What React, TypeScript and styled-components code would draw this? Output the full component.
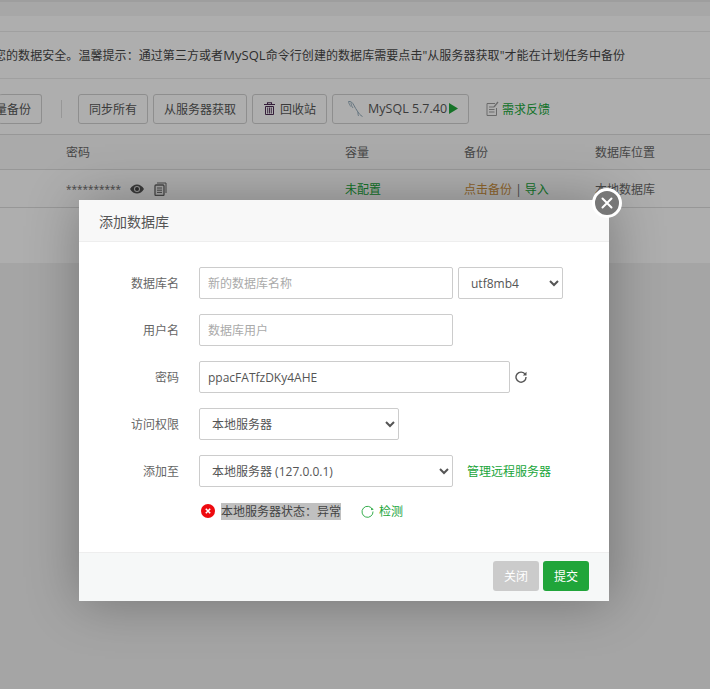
import React from "react";
import styled, { createGlobalStyle } from "styled-components";

const F = `"Open Sans", "Noto Sans CJK SC", sans-serif`;

const Global = createGlobalStyle`
  html, body { margin: 0; padding: 0; background: #f0f0f0; }
  * { box-sizing: border-box; }
  body { width: 710px; height: 689px; overflow: hidden; font-family: ${F}; font-size: 12px; color: #666; }
`;

const Page = styled.div`
  position: relative;
  width: 710px;
  height: 689px;
  overflow: hidden;
  background: #ededed;
`;
const TopBand = styled.div`
  height: 16px;
  background: #f0f0f0;
  border-top: 2px solid #e2e2e2;
`;
const Crumb = styled.div`
  height: 16px;
  background: #fafafa;
  border-bottom: 1px solid #e6e6e6;
`;
const Notice = styled.div`
  height: 47px;
  display: flex;
  align-items: center;
  white-space: nowrap;
  color: #444;
  font-size: 12px;
  background: #fafafa;
  border-bottom: 1px solid #e6e6e6;
  letter-spacing: 0.06px;
`;
const NoticeText = styled.span`
  margin-left: -6px;
`;
const NoticeLatin = styled.span`
  font-size: 13px;
`;
const Toolbar = styled.div`
  height: 56px;
  display: flex;
  align-items: center;
  background: #fafafa;
  border-bottom: 1px solid #d8d8d8;
  padding-top: 4px;
`;
const Btn = styled.div<{ $ml?: number }>`
  height: 30px;
  display: flex;
  align-items: center;
  padding: 0 10px;
  margin-left: ${(p) => p.$ml ?? 5}px;
  border: 1px solid #ccc;
  border-radius: 3px;
  color: #555;
  font-size: 12px;
  white-space: nowrap;
`;
const ClipBtn = styled(Btn)`
  margin-left: -1px;
  border-left: 0;
  width: 43px;
  overflow: hidden;
  justify-content: flex-end;
`;
const MysqlBtn = styled(Btn)`
  padding: 0 10px 0 15px;
  font-size: 12.5px;
`;
const PlayIcon = styled.svg`
  margin-left: 2px;
`;
const Sep = styled.div`
  width: 1px;
  height: 18px;
  background: #d8d8d8;
  margin: 0 16px 0 19px;
`;
const FeedIcon = styled.svg`
  margin-left: 17px;
  margin-right: 3px;
`;
const GreenLink = styled.span`
  color: #20a53a;
`;
const Row = styled.div<{ $h: number; $bg?: string }>`
  height: ${(p) => p.$h}px;
  display: grid;
  grid-template-columns: 66px 279px 119px 131px 1fr;
  align-items: center;
  background: ${(p) => p.$bg ?? "#fafafa"};
  border-bottom: 1px solid #d8d8d8;
  color: #666;
  font-size: 12px;
  white-space: nowrap;
`;
const Pw = styled.span`
  display: flex;
  align-items: center;
  color: #666;
`;
const Stars = styled.span`
  font-size: 10px;
  line-height: 12px;
  margin-right: 9px;
`;
const EyeIcon = styled.svg`
  margin-right: 10px;
`;
const Orange = styled.span`
  color: #cc9140;
`;
const Rest = styled.div`
  height: 55px;
  background: #fafafa;
`;
const Shade = styled.div`
  position: absolute;
  inset: 0;
  background: rgba(0, 0, 0, 0.3);
`;
const Modal = styled.div`
  position: absolute;
  left: 79px;
  top: 200px;
  width: 530px;
  height: 401px;
  background: #fff;
  box-shadow: 1px 1px 50px rgba(0, 0, 0, 0.3);
  display: flex;
  flex-direction: column;
`;
const Title = styled.div`
  height: 42px;
  flex: none;
  display: flex;
  align-items: center;
  padding-left: 20px;
  background: #f8f8f8;
  border-bottom: 1px solid #eee;
  color: #555;
  font-size: 14px;
`;
const Close = styled.div`
  position: absolute;
  right: -13px;
  top: -12px;
  width: 30px;
  height: 30px;
  border-radius: 50%;
  background: #777;
  border: 3px solid #fff;
  display: flex;
  align-items: center;
  justify-content: center;
`;
const Body = styled.div`
  flex: 1;
  display: flex;
  flex-direction: column;
  gap: 15px;
  padding: 25px 0 0 0;
`;
const FormRow = styled.div`
  display: flex;
  align-items: center;
  height: 32px;
`;
const Label = styled.div`
  width: 100px;
  margin-right: 20px;
  text-align: right;
  color: #666;
  font-size: 12px;
  flex: none;
`;
const Input = styled.input<{ $w: number }>`
  width: ${(p) => p.$w}px;
  height: 32px;
  border: 1px solid #ccc;
  border-radius: 2px;
  padding: 0 8px;
  font-family: ${F};
  font-size: 12px;
  color: #555;
  outline: none;
  background: #fff;
  &::placeholder { color: #aaa; opacity: 1; }
`;
const Select = styled.select<{ $w: number; $ml?: number }>`
  width: ${(p) => p.$w}px;
  height: 32px;
  margin-left: ${(p) => p.$ml ?? 0}px;
  border: 1px solid #ccc;
  border-radius: 2px;
  padding: 0 8px;
  font-family: ${F};
  font-size: 12px;
  color: #555;
  background: #fff;
  outline: none;
`;
const RefreshIcon = styled.svg`
  margin-left: 5px;
`;
const RemoteLink = styled(GreenLink)`
  margin-left: 14px;
  font-size: 12px;
`;
const Status = styled.div`
  display: flex;
  align-items: center;
  height: 18px;
  margin: 0 0 0 122px;
  font-size: 12px;
  color: #555;
`;
const Selected = styled.span`
  background: #c0c0c0;
  color: #444;
  margin-left: 6px;
  line-height: 17px;
  height: 17px;
`;
const CheckIcon = styled.svg`
  margin-left: 20px;
  margin-right: 5px;
`;
const Footer = styled.div`
  height: 49px;
  flex: none;
  display: flex;
  align-items: center;
  justify-content: flex-end;
  gap: 4px;
  padding: 0 20px 2px 0;
  background: #f6f8f8;
  border-top: 1px solid #eee;
`;
const FootBtn = styled.div<{ $bg: string }>`
  width: 46px;
  height: 30px;
  display: flex;
  align-items: center;
  justify-content: center;
  background: ${(p) => p.$bg};
  color: #fff;
  border-radius: 3px;
  font-size: 12px;
`;
const TrashSvg = styled.svg`
  margin: 0 5px 0 1px;
`;
const DolphinSvg = styled.svg`
  margin-right: 5px;
`;

const Trash = () => (
  <TrashSvg width="11" height="13" viewBox="0 0 11 13">
    <path d="M0 2.500h11M3.500 2.500V.8h4v1.700" fill="none" stroke="#4b2a52" strokeWidth="1.100" />
    <path d="M1.500 4.500h8v8h-8z" fill="none" stroke="#4b2a52" strokeWidth="1" />
    <path d="M3.700 5.500v6M5.500 5.500v6M7.300 5.500v6" stroke="#4b2a52" strokeWidth="0.900" />
  </TrashSvg>
);

const Dolphin = () => (
  <DolphinSvg width="15" height="18" viewBox="0 0 15 18">
    <path d="M.5 1.500c2.300-.5 4 1 5.300 3.600 1 2 2.500 4.500 4.200 7 1 1.400 2 3 4.500 4.400" fill="none" stroke="#8ea6b5" strokeWidth="1" />
    <path d="M.5 1.500c.3 2 1.200 3.500 2.500 5.200M3 2.500C3 4.500 3.700 6 5 8M10 12c-.2 1.500 0 2.800.5 4" fill="none" stroke="#8ea6b5" strokeWidth="0.900" />
  </DolphinSvg>
);

const Copy = () => (
  <svg width="13" height="14" viewBox="0 0 13 14">
    <path d="M3 1h9v10" fill="none" stroke="#666" strokeWidth="1" />
    <rect x="1" y="3" width="9" height="10.500" rx="1" fill="#eee" stroke="#666" strokeWidth="1.300" />
    <path d="M3 6h5M3 8.200h5M3 10.400h5" stroke="#666" strokeWidth="1" />
  </svg>
);

export default function App() {
  return (
    <Page>
      <Global />
      <TopBand />
      <Crumb />
      <Notice>
        <NoticeText>
          您的数据安全。温馨提示：通过第三方或者<NoticeLatin>MySQL</NoticeLatin>命令行创建的数据库需要点击"从服务器获取"才能在计划任务中备份
        </NoticeText>
      </Notice>
      <Toolbar>
        <ClipBtn>量备份</ClipBtn>
        <Sep />
        <Btn $ml={0}>同步所有</Btn>
        <Btn>从服务器获取</Btn>
        <Btn>
          <Trash />
          回收站
        </Btn>
        <MysqlBtn>
          <Dolphin />
          MySQL 5.7.40
          <PlayIcon width="9" height="11" viewBox="0 0 9 11"><path d="M0 0l9 5.500L0 11z" fill="#20a53a" /></PlayIcon>
        </MysqlBtn>
        <FeedIcon width="13" height="15" viewBox="0 0 13 15">
          <path d="M9 2.500H1v12h9.500V7" fill="none" stroke="#999" strokeWidth="1" />
          <path d="M3 6h5M3 8.500h5.500M3 11h5.500" stroke="#999" strokeWidth="1" />
          <path d="M8 6l4-5" stroke="#999" strokeWidth="1.300" />
        </FeedIcon>
        <GreenLink>需求反馈</GreenLink>
      </Toolbar>
      <Row $h={35} $bg="#f4f4f4">
        <span />
        <span>密码</span>
        <span>容量</span>
        <span>备份</span>
        <span>数据库位置</span>
      </Row>
      <Row $h={38}>
        <span />
        <Pw>
          <Stars>**********</Stars>
          <EyeIcon width="14" height="10" viewBox="0 0 14 10">
            <path d="M0 5c1.800-3 4.200-4.500 7-4.500S12.200 2 14 5c-1.800 3-4.200 4.500-7 4.500S1.800 8 0 5z" fill="#555" />
            <circle cx="7" cy="5" r="3" fill="#ddd" />
            <circle cx="7" cy="5" r="2" fill="#444" />
          </EyeIcon>
          <Copy />
        </Pw>
        <GreenLink>未配置</GreenLink>
        <span>
          <Orange>点击备份</Orange> | <GreenLink>导入</GreenLink>
        </span>
        <span>本地数据库</span>
      </Row>
      <Rest />
      <Shade />
      <Modal>
        <Title>添加数据库</Title>
        <Close>
          <svg width="12" height="12" viewBox="0 0 12 12">
            <path d="M1.500 1.500l9 9M10.500 1.500l-9 9" stroke="#fff" strokeWidth="2" strokeLinecap="round" />
          </svg>
        </Close>
        <Body>
          <FormRow>
            <Label>数据库名</Label>
            <Input $w={254} placeholder="新的数据库名称" readOnly />
            <Select $w={105} $ml={5} defaultValue="utf8mb4">
              <option>utf8mb4</option>
            </Select>
          </FormRow>
          <FormRow>
            <Label>用户名</Label>
            <Input $w={254} placeholder="数据库用户" readOnly />
          </FormRow>
          <FormRow>
            <Label>密码</Label>
            <Input $w={311} value="ppacFATfzDKy4AHE" readOnly />
            <RefreshIcon width="12" height="12" viewBox="0 0 12 12">
              <path d="M10.300 3.600A5 5 0 1 0 11 6" fill="none" stroke="#555" strokeWidth="1.400" />
              <path d="M11.500 0.800v3.700H7.800z" fill="#555" />
            </RefreshIcon>
          </FormRow>
          <FormRow>
            <Label>访问权限</Label>
            <Select $w={200} defaultValue="本地服务器">
              <option>本地服务器</option>
            </Select>
          </FormRow>
          <FormRow>
            <Label>添加至</Label>
            <Select $w={254} defaultValue="本地服务器 (127.0.0.1)">
              <option>本地服务器 (127.0.0.1)</option>
            </Select>
            <RemoteLink>管理远程服务器</RemoteLink>
          </FormRow>
          <Status>
            <svg width="14" height="14" viewBox="0 0 14 14">
              <circle cx="7" cy="7" r="7" fill="#ee0a0f" />
              <path d="M4.800 4.800l4.400 4.400M9.200 4.800l-4.400 4.400" stroke="#fff" strokeWidth="1.600" />
            </svg>
            <Selected>本地服务器状态：异常</Selected>
            <CheckIcon width="13" height="13" viewBox="0 0 13 13">
              <path d="M11.500 4.500A5.500 5.500 0 1 0 12 6.500" fill="none" stroke="#20a53a" strokeWidth="0.900" />
              <path d="M12.800 4.300L10 5.200 10.500 3z" fill="#20a53a" />
            </CheckIcon>
            <GreenLink>检测</GreenLink>
          </Status>
        </Body>
        <Footer>
          <FootBtn $bg="#cbcbcb">关闭</FootBtn>
          <FootBtn $bg="#20a53a">提交</FootBtn>
        </Footer>
      </Modal>
    </Page>
  );
}
